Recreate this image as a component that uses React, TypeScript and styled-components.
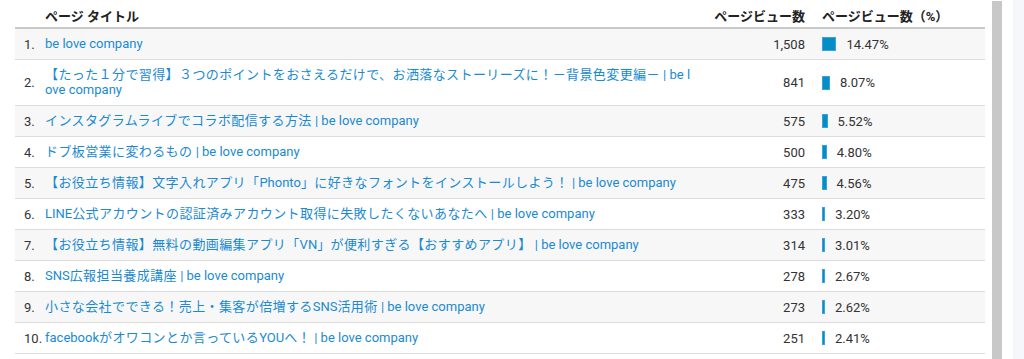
import React from "react";
import styled, { createGlobalStyle } from "styled-components";

const Global = createGlobalStyle`
  html, body { margin: 0; padding: 0; background: #fff; }
  body { font-family: Roboto, "Noto Sans CJK JP", sans-serif; }
`;

const Page = styled.div`
  display: flex;
  width: 1024px;
  height: 359px;
  overflow: hidden;
`;

const Main = styled.div`
  width: 970px;
  margin-left: 15px;
`;

const Scrollbar = styled.div`
  width: 10px;
  margin: 1px 0 0 7px;
  background: #c8c8c8;
`;

const SidePanel = styled.div`
  flex: 1;
  margin-left: 11px;
  background: #f5f7fa;
`;

const Table = styled.table`
  width: 100%;
  border-collapse: collapse;
  table-layout: fixed;
  font-size: 13px;
  color: #333;
`;

const Th = styled.th<{ $align?: string; $pad?: number }>`
  height: 24px;
  padding: 0 0 3px ${(p) => p.$pad || 0}px;
  font-size: 13px;
  line-height: 15px;
  font-weight: 700;
  color: #222;
  text-align: ${(p) => p.$align || "left"};
  border-bottom: 2px solid #c9c9c9;
  vertical-align: bottom;
`;

const Tr = styled.tr<{ $odd: boolean }>`
  background: ${(p) => (p.$odd ? "#f7f7f7" : "#fff")};
  border-bottom: 1px solid #dcdcdc;
`;

const NumCell = styled.td`
  padding: 0 0 0 9px;
  height: 30px;
  vertical-align: middle;
  color: #333;
  white-space: nowrap;
`;

const TitleCell = styled.td`
  padding: 7px 0 8px;
  vertical-align: middle;
  line-height: 15px;
  word-break: break-all;
`;

const Link = styled.a`
  color: #1a8ad2;
  text-decoration: none;
`;

const Wide = styled.span`
  letter-spacing: 0.4px;
`;

const ViewsCell = styled.td`
  text-align: right;
  vertical-align: middle;
  padding: 0;
`;

const BarCell = styled.td`
  vertical-align: middle;
  padding: 0 0 0 17px;
`;

const BarWrap = styled.div`
  display: flex;
  align-items: center;
  gap: 10px;
`;

const Bar = styled.div`
  height: 14px;
  box-sizing: border-box;
  background: #058dc7;
  border: 1px solid #3aa4d6;
  flex: none;
`;

const rows = [
  ["be love company", "1,508", 14.47],
  ["【たった１分で習得】３つのポイントをおさえるだけで、お洒落なストーリーズに！－背景色変更編－ | be love company", "841", 8.07],
  ["インスタグラムライブでコラボ配信する方法 | be love company", "575", 5.52],
  ["ドブ板営業に変わるもの | be love company", "500", 4.8],
  ["【お役立ち情報】文字入れアプリ「Phonto」に好きなフォントをインストールしよう！ | be love company", "475", 4.56],
  ["LINE公式アカウントの認証済みアカウント取得に失敗したくないあなたへ | be love company", "333", 3.2],
  ["【お役立ち情報】無料の動画編集アプリ「VN」が便利すぎる【おすすめアプリ】 | be love company", "314", 3.01],
  ["SNS広報担当養成講座 | be love company", "278", 2.67],
  ["小さな会社でできる！売上・集客が倍増するSNS活用術 | be love company", "273", 2.62],
  ["facebookがオワコンとか言っているYOUへ！ | be love company", "251", 2.41],
] as const;

function Title({ text }: { text: string }) {
  const parts = text.match(/[\x00-\x7f]+|[^\x00-\x7f]+/g) || [];
  return (
    <>
      {parts.map((p, i) =>
        /^[\x00-\x7f]/.test(p) ? <React.Fragment key={i}>{p}</React.Fragment> : <Wide key={i}>{p}</Wide>
      )}
    </>
  );
}

export default function App() {
  return (
    <>
      <Global />
      <Page>
        <Main>
          <Table>
            <colgroup>
              <col style={{ width: 30 }} />
              <col style={{ width: 652 }} />
              <col style={{ width: 108 }} />
              <col />
            </colgroup>
            <thead>
              <tr>
                <Th />
                <Th>ページ タイトル</Th>
                <Th $align="right">ページビュー数</Th>
                <Th $pad={17}>ページビュー数（%）</Th>
              </tr>
            </thead>
            <tbody>
              {rows.map(([title, views, pct], i) => (
                <Tr key={i} $odd={i % 2 === 0}>
                  <NumCell>{i + 1}.</NumCell>
                  <TitleCell>
                    <Link href="#">
                      <Title text={title} />
                    </Link>
                  </TitleCell>
                  <ViewsCell>{views}</ViewsCell>
                  <BarCell>
                    <BarWrap>
                      <Bar style={{ width: Math.max(3, pct) }} />
                      <span>{pct.toFixed(2)}%</span>
                    </BarWrap>
                  </BarCell>
                </Tr>
              ))}
            </tbody>
          </Table>
        </Main>
        <Scrollbar />
        <SidePanel />
      </Page>
    </>
  );
}
